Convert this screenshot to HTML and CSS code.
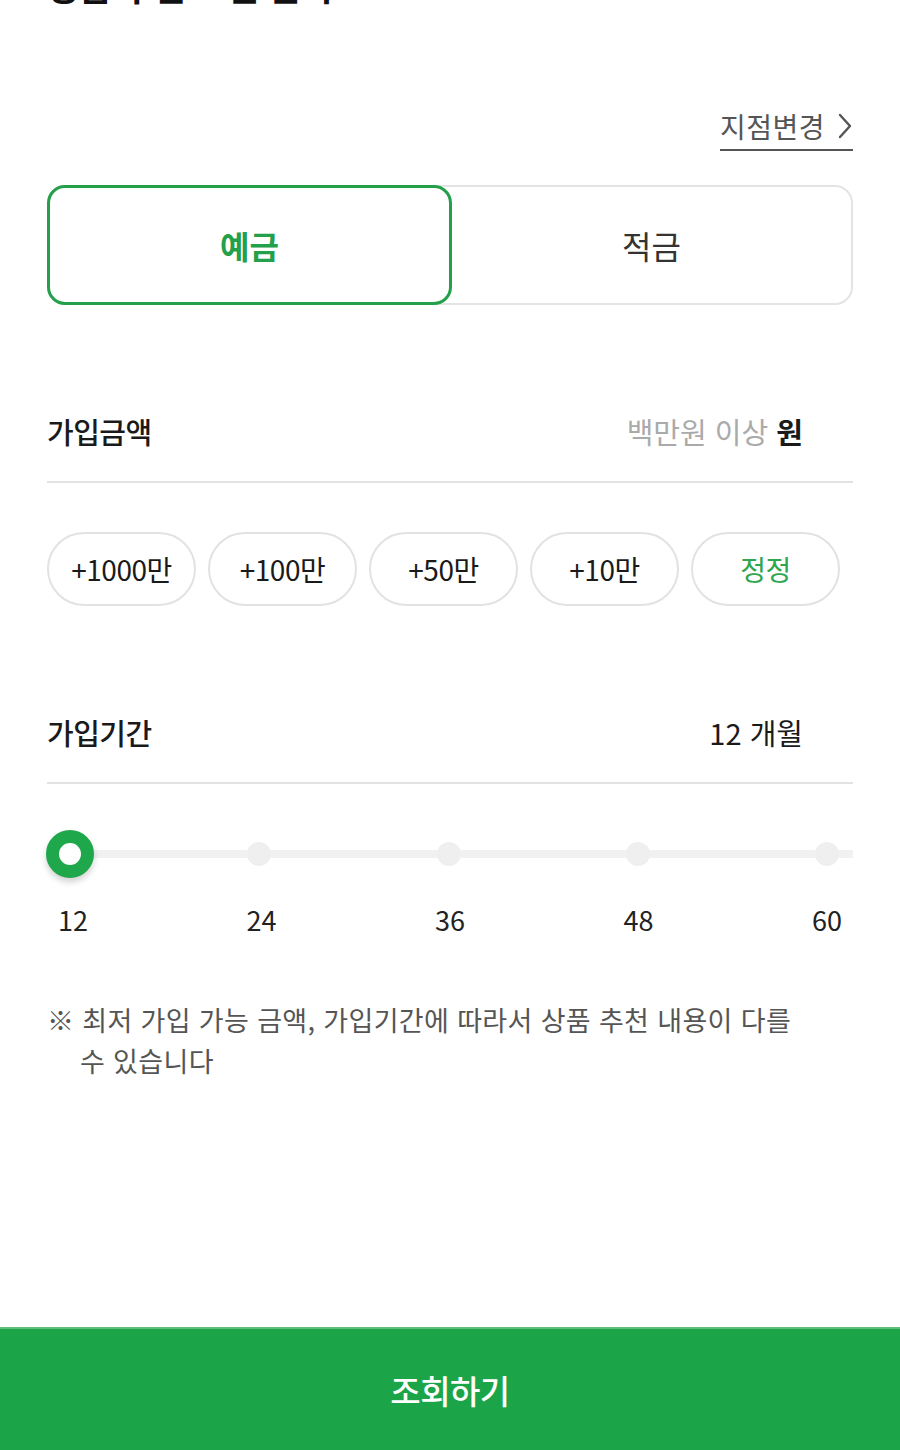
FILE: index.html
```html
<!DOCTYPE html>
<html lang="ko">
<head>
<meta charset="utf-8">
<title>상품 추천</title>
<link rel="stylesheet" href="styles.css">
</head>
<body>
<div class="page">
  <main class="content">
    <h1 class="title">상품 추천 조건 선택</h1>

    <div class="branch-row">
      <a class="branch-link" href="#">지점변경
        <svg class="chev" width="16" height="26" viewBox="0 0 16 26" aria-hidden="true"><path d="M3 2 L13 13 L3 24" fill="none" stroke="#555" stroke-width="2.4" stroke-linecap="round" stroke-linejoin="round"/></svg>
      </a>
    </div>

    <div class="seg">
      <button class="seg-item active">예금</button>
      <button class="seg-item">적금</button>
    </div>

    <div class="field-row amount-row">
      <span class="field-label">가입금액</span>
      <span class="field-value"><span class="placeholder">백만원 이상</span> <b>원</b></span>
    </div>

    <div class="chips">
      <button class="chip">+1000만</button>
      <button class="chip">+100만</button>
      <button class="chip">+50만</button>
      <button class="chip">+10만</button>
      <button class="chip chip-green">정정</button>
    </div>

    <div class="field-row period-row">
      <span class="field-label">가입기간</span>
      <span class="field-value period-value">12 개월</span>
    </div>

    <div class="slider">
      <span class="stop"><span class="thumb"></span></span>
      <span class="stop"><span class="dot"></span></span>
      <span class="stop"><span class="dot"></span></span>
      <span class="stop"><span class="dot"></span></span>
      <span class="stop"><span class="dot"></span></span>
    </div>
    <div class="slider-labels">
      <span class="stop-label first">12</span>
      <span class="stop-label">24</span>
      <span class="stop-label">36</span>
      <span class="stop-label">48</span>
      <span class="stop-label">60</span>
    </div>

    <p class="note">※ 최저 가입 가능 금액, 가입기간에 따라서 상품 추천 내용이 다를 수 있습니다</p>
  </main>

  <button class="submit">조회하기</button>
</div>
</body>
</html>
```

FILE: styles.css
```css
* { box-sizing: border-box; }

html, body {
  margin: 0;
  padding: 0;
  background: #ffffff;
}

body {
  font-family: "Noto Sans CJK KR", "Noto Sans", sans-serif;
  color: #222222;
}

.page {
  min-height: 1450px;
  display: flex;
  flex-direction: column;
}

.content {
  padding: 0 47px;
  flex: 1;
}

.title {
  margin: -37px 0 0;
  height: 44px;
  font-size: 36px;
  line-height: 44px;
  font-weight: 700;
  color: #111111;
  letter-spacing: -1px;
}

.branch-row {
  display: flex;
  justify-content: flex-end;
  margin-top: 99px;
}

.branch-link {
  display: flex;
  align-items: center;
  gap: 12px;
  font-size: 28px;
  line-height: 40px;
  color: #555555;
  text-decoration: none;
  padding-bottom: 3px;
  border-bottom: 2px solid #555555;
  letter-spacing: 0.5px;
}

.chev { display: block; }

.seg {
  margin-top: 34px;
  height: 120px;
  display: flex;
  border: 2px solid #e4e4e4;
  border-radius: 18px;
}

.seg-item {
  flex: 1;
  display: flex;
  align-items: center;
  justify-content: center;
  background: transparent;
  border: 0;
  font-family: inherit;
  font-size: 32px;
  font-weight: 400;
  color: #333333;
  padding: 0;
}

.seg-item.active {
  margin: -2px 0 -2px -2px;
  border: 3.5px solid #24a04b;
  border-radius: 18px;
  color: #23a04a;
  font-weight: 700;
}

.field-row {
  display: flex;
  justify-content: space-between;
  align-items: center;
  height: 82px;
  padding: 0 50px 20px 0;
  border-bottom: 2px solid #e2e2e2;
  line-height: 60px;
}

.amount-row { margin-top: 96px; }
.period-row { margin-top: 96px; }

.field-label {
  font-size: 29px;
  font-weight: 500;
  color: #1a1a1a;
  letter-spacing: -0.5px;
}

.field-value {
  font-size: 29px;
  color: #1a1a1a;
  letter-spacing: 0;
}

.field-value b { font-weight: 700; }

.placeholder { color: #aaaaaa; }

.period-value { font-weight: 400; }

.chips {
  margin-top: 49px;
  display: flex;
  gap: 12px;
}

.chip {
  width: 149px;
  height: 74px;
  border: 2px solid #e2e2e2;
  border-radius: 37px;
  background: #ffffff;
  font-family: inherit;
  font-size: 28px;
  color: #1a1a1a;
  padding: 0;
  letter-spacing: -0.5px;
}

.chip-green { color: #2ea64f; }

.slider {
  margin-top: 46px;
  margin-right: 0;
  height: 48px;
  display: flex;
  justify-content: space-between;
  background: linear-gradient(#f1f1f1, #f1f1f1) center / 100% 8px no-repeat;
}

.stop {
  width: 48px;
  height: 48px;
  display: flex;
  align-items: center;
  justify-content: center;
}

.stop:first-child { margin-left: -1px; }
.stop:last-child { margin-right: 2px; }

.dot {
  width: 24px;
  height: 24px;
  border-radius: 50%;
  background: #efefef;
}

.thumb {
  width: 48px;
  height: 48px;
  border-radius: 50%;
  border: 13px solid #1fa84b;
  background: #ffffff;
  box-shadow: 0 4px 6px rgba(0, 0, 0, 0.18);
}

.slider-labels {
  margin-top: 22px;
  margin-right: 2px;
  display: flex;
  justify-content: space-between;
}

.stop-label {
  width: 48px;
  text-align: center;
  font-size: 27px;
  line-height: 40px;
  color: #222222;
}

.stop-label.first { margin-left: 2px; }

.note {
  margin: 59px 0 0;
  padding-left: 33px;
  text-indent: -33px;
  padding-right: 50px;
  font-size: 27px;
  line-height: 41px;
  color: #555555;
  letter-spacing: 0.35px;
}

.submit {
  height: 123px;
  width: 100%;
  border: 0;
  border-top: 2px solid #5fbf7a;
  background: #1ca548;
  color: #ffffff;
  font-family: inherit;
  font-size: 33px;
  font-weight: 500;
  letter-spacing: -0.5px;
  padding: 0;
}
```
